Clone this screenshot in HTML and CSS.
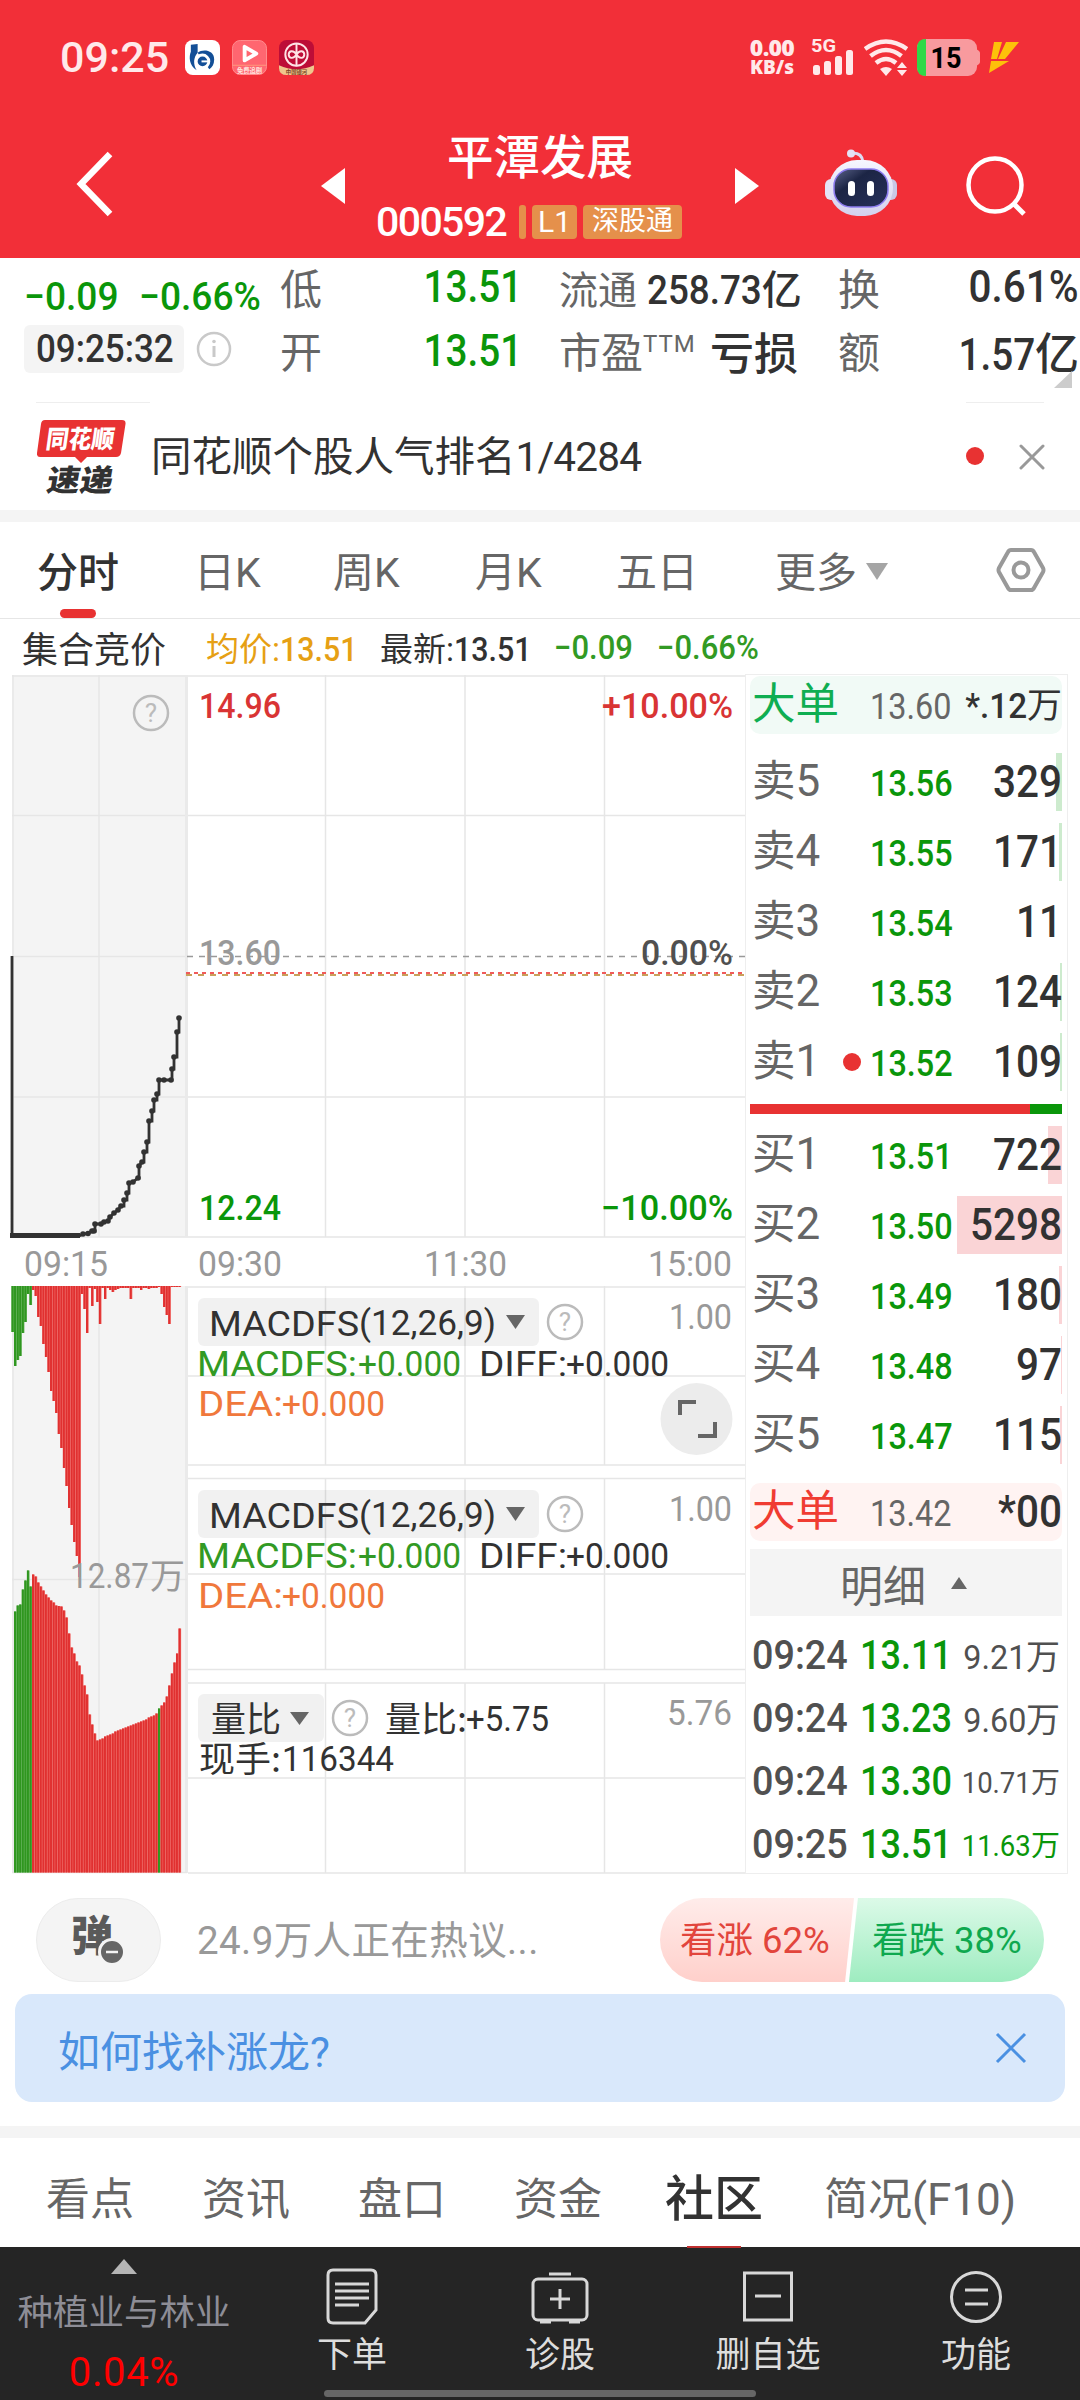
FILE: index.html
```html
<!DOCTYPE html>
<html lang="zh-CN">
<head>
<meta charset="UTF-8">
<meta name="viewport" content="width=device-width, initial-scale=1.0">
<title>平潭发展 000592</title>
<link rel="stylesheet" href="styles.css">
</head>
<body>

<header class="header">
    <div class="status">
        <span class="clock">09:25</span>
        <svg class="app-icon" viewBox="0 0 36 36">
            <rect width="36" height="36" rx="8" fill="#fff"/>
            <path d="M6 5l7-1v9c-4 4-5 12-1 18-8-5-8-14-6-19z" fill="#134f97"/>
            <path d="M13 13c5-4 17-3 17 7 0 5-2 8-5 10" fill="#134f97"/>
            <circle cx="18" cy="22" r="6.500" fill="#134f97" stroke="#fff" stroke-width="3"/>
            <path d="M17 22h8" stroke="#fff" stroke-width="2"/>
        </svg>
        <svg class="app-icon" viewBox="0 0 36 36">
            <rect x=".5" y=".5" width="35" height="35" rx="8" fill="#ff6670" stroke="#ff8d90"/>
            <path d="M13 7v14l12-7z" fill="none" stroke="#fff" stroke-width="4" stroke-linejoin="round"/>
            <path d="M1 26h34" stroke="#ff9a7c"/>
            <text x="18" y="33.5" font-size="6.5" font-weight="700" fill="#ffe6e0" text-anchor="middle">免费追剧</text>
        </svg>
        <svg class="app-icon" viewBox="0 0 36 36">
            <rect width="36" height="36" rx="8" fill="#bd0d37"/>
            <path d="M0 26q18 8 36 0v3q0 7-8 7H8q-8 0-8-7z" fill="#efc78d"/>
            <circle cx="18" cy="15" r="11.5" fill="none" stroke="#ffe3e6" stroke-width="2"/>
            <path d="M18 3v24M18 15c-3-5-8-4-8 0s5 5 8 0 8-4 8 0-5 5-8 0" fill="none" stroke="#ffe3e6" stroke-width="2"/>
            <text x="18" y="34.5" font-size="5.5" font-weight="700" fill="#7c4426" text-anchor="middle">中国银河</text>
        </svg>
        <div class="speed"><b>0.00</b><b>KB/s</b></div>
        <svg class="signal" width="44" height="38" viewBox="0 0 44 38">
            <text x="0" y="14" font-size="18" font-weight="700" fill="#ffe9ea" textLength="25" lengthAdjust="spacingAndGlyphs">5G</text>
            <g fill="#ffe9ea">
                <rect x="2" y="27" width="7" height="10" rx="2.5"/>
                <rect x="13" y="23" width="7" height="14" rx="2.5"/>
                <rect x="24" y="18" width="7" height="19" rx="2.5"/>
                <rect x="35" y="12" width="7" height="25" rx="2.5"/>
            </g>
        </svg>
        <svg class="wifi" width="44" height="37" viewBox="0 0 44 37">
            <g fill="none" stroke="#ffe9ea" stroke-width="4.5">
                <path d="M1 10Q22-5 43 10"/>
                <path d="M6.500 17Q22 5 37.500 17"/>
                <path d="M12 24Q22 16 32 24"/>
            </g>
            <path d="M16 30q6-4 12 0l-6 7z" fill="#ffe9ea"/>
            <path d="M33 29l5-6 5 6zM33 31h10l-5 6z" fill="#ffe9ea"/>
        </svg>
        <svg class="battery" width="64" height="37" viewBox="0 0 64 37">
            <path d="M59 10q4 2 4 4v9q0 2-4 4z" fill="#f89a9e"/>
            <rect width="60" height="37" rx="9" fill="#f89a9e"/>
            <path d="M9 0v37q-9 0-9-9V9q0-9 9-9z" fill="#2fd848"/>
            <text x="29" y="28.500" font-size="29" font-weight="700" fill="#000" text-anchor="middle" textLength="31" lengthAdjust="spacingAndGlyphs">15</text>
        </svg>
        <svg class="bolt" width="30" height="31" viewBox="0 0 30 31">
            <path d="M5 0h8L8 17H2zM17 0h13L16 17H9zM2 19h18L0 31z" fill="#fdc10a"/>
        </svg>
    </div>
    <div class="nav">
        <svg class="back" width="38" height="66" viewBox="0 0 38 66"><path d="M35 3L6 33l29 30" fill="none" stroke="#fff" stroke-width="6.500"/></svg>
        <svg class="prev" width="24" height="36" viewBox="0 0 24 36"><path d="M0 18L24 0v36z" fill="#fff"/></svg>
        <div class="title">
            <div class="stock-name">平潭发展</div>
            <div class="stock-meta">
                <span class="code">000592</span>
                <i class="tag-line"></i>
                <span class="tag tag-l1">L1</span>
                <span class="tag">深股通</span>
            </div>
        </div>
        <svg class="next" width="24" height="36" viewBox="0 0 24 36"><path d="M24 18L0 0v36z" fill="#fff"/></svg>
        <svg class="robot" width="72" height="68" viewBox="0 0 72 68">
            <defs>
                <linearGradient id="head" x1="0" y1="0" x2="0" y2="1"><stop offset="0" stop-color="#f6f6ff"/><stop offset="1" stop-color="#d3d1ee"/></linearGradient>
                <linearGradient id="face" x1="0" y1="0" x2="1" y2="1"><stop offset="0" stop-color="#5e668d"/><stop offset=".35" stop-color="#1c2545"/><stop offset="1" stop-color="#27305a"/></linearGradient>
            </defs>
            <path d="M26 4q11-1 12 9" fill="none" stroke="#dcdcf2" stroke-width="3"/>
            <circle cx="26" cy="4.500" r="4" fill="#e4e3f6"/>
            <rect y="30" width="14" height="21" rx="6" fill="#e4e3f6"/>
            <rect x="58" y="30" width="14" height="21" rx="6" fill="#c9c8e6"/>
            <rect x="4" y="11" width="64" height="56" rx="28" fill="url(#head)"/>
            <rect x="9" y="20" width="54" height="38" rx="17" fill="url(#face)" stroke="#8d7cf0" stroke-width="1.500"/>
            <rect x="23" y="32" width="7" height="15" rx="3.500" fill="#fff"/>
            <rect x="42" y="32" width="7" height="15" rx="3.500" fill="#fff"/>
        </svg>
        <svg class="search" width="62" height="62" viewBox="0 0 62 62">
            <circle cx="30" cy="30" r="26.500" fill="none" stroke="#fff" stroke-width="4.500"/>
            <path d="M48 48l11 11" stroke="#fff" stroke-width="5"/>
        </svg>
    </div>
</header>

<section class="quote">
    <div class="quote-left">
        <div class="change"><span class="num">−0.09</span><span class="num">−0.66%</span></div>
        <div class="time-row">
            <div class="time-pill"><span class="num">09:25:32</span></div>
            <svg width="36" height="36" viewBox="0 0 36 36">
                <circle cx="18" cy="18" r="16" fill="none" stroke="#c9c9c9" stroke-width="2.500"/>
                <circle cx="18" cy="10.500" r="1.800" fill="#c9c9c9"/>
                <path d="M18 15v11" stroke="#c9c9c9" stroke-width="3"/>
            </svg>
        </div>
    </div>
    <dl class="stats">
        <div><dt>低</dt><dd class="green num">13.51</dd></div>
        <div><dt class="small">流通</dt><dd class="mid"><span class="num">258.73</span>亿</dd></div>
        <div><dt>换</dt><dd class="num turnover">0.61%</dd></div>
        <div><dt>开</dt><dd class="green num">13.51</dd></div>
        <div><dt>市盈<sup>TTM</sup></dt><dd class="word">亏损</dd></div>
        <div><dt>额</dt><dd class="amount"><span class="num">1.57</span>亿</dd></div>
    </dl>
    <i class="corner"></i>
</section>

<section class="news">
    <svg class="news-logo" width="90" height="74" viewBox="0 0 90 74">
        <path d="M8 0h77q4 0 3.500 4l-4.500 29q-1 4-5 4H50l-6 6-6-6H3q-3.500 0-3-4L4 4q.5-4 4-4z" fill="#e83232"/>
        <text x="43" y="28" font-size="25" font-weight="900" fill="#fff" text-anchor="middle" textLength="68" lengthAdjust="spacingAndGlyphs" transform="skewX(-8) translate(3 0)">同花顺</text>
        <text x="45" y="71" font-size="30" font-weight="900" fill="#323232" text-anchor="middle" textLength="66" lengthAdjust="spacingAndGlyphs" transform="skewX(-10) translate(9 0)">速递</text>
    </svg>
    <p>同花顺个股人气排名<span>1/4284</span></p>
    <i class="dot"></i>
    <svg class="close" width="26" height="26" viewBox="0 0 26 26"><path d="M2 2l22 22M24 2L2 24" stroke="#999" stroke-width="3" stroke-linecap="round"/></svg>
</section>

<nav class="periods">
    <a class="active">分时</a>
    <a>日K</a>
    <a>周K</a>
    <a>月K</a>
    <a>五日</a>
    <a>更多<i></i></a>
    <svg width="50" height="46" viewBox="0 0 50 46">
        <path d="M15 3h20q2 0 3 2l9 16q1 2 0 4l-9 16q-1 2-3 2H15q-2 0-3-2L3 25q-1-2 0-4l9-16q1-2 3-2z" fill="none" stroke="#999" stroke-width="4"/>
        <circle cx="25" cy="23" r="7.500" fill="none" stroke="#999" stroke-width="4"/>
    </svg>
</nav>

<div class="summary">
    <b>集合竞价</b>
    <span class="avg">均价:<span class="num">13.51</span></span>
    <span class="last">最新:<span class="num">13.51</span></span>
    <span class="num down">−0.09</span>
    <span class="num down">−0.66%</span>
</div>

<main class="market">
    <svg class="chart" width="745" height="1201" viewBox="0 674 745 1201">
        <!-- call auction background -->
        <rect x="12" y="675" width="175" height="562" fill="#f4f4f4"/>
        <rect x="12" y="1286" width="175" height="587" fill="#f4f4f4"/>

        <!-- price grid -->
        <g stroke="#e6e6e6" stroke-width="1.500">
            <path d="M12 676H745M12 815.500H745M12 956.500H187M12 1097H745M12 1237H745"/>
            <path d="M13 675V1237M99 675V1237M325.500 675V1237M465 675V1237M604.500 675V1237"/>
            <path d="M186.500 675V1237M186.500 1286V1873" stroke="#eaeaea" stroke-width="3"/>
            <path d="M13 1286V1873M99 1286V1873M12 1579.500H187M12 1872.500H187"/>
            <path d="M188 1287H745M188 1376H745M188 1465H745"/>
            <path d="M188 1478.500H745M188 1574H745M188 1669.500H745"/>
            <path d="M188 1683H745M188 1778H745M188 1873H745"/>
            <path d="M325.500 1286V1465M465 1286V1465M604.500 1286V1465"/>
            <path d="M325.500 1478V1670M465 1478V1670M604.500 1478V1670"/>
            <path d="M325.500 1683V1873M465 1683V1873M604.500 1683V1873"/>
        </g>
        <path d="M187 956.500H745" stroke="#999" stroke-width="1.500" stroke-dasharray="6 6"/>
        <path d="M186 975H745" stroke="#c8a05a" stroke-width="2" stroke-dasharray="6 6"/>
        <path d="M186 973H745" stroke="#f05a5a" stroke-width="2" stroke-dasharray="4 4"/>

        <g id="priceLine"></g>

        <g class="axis">
            <text x="199" y="718" textLength="82" fill="#d93434">14.96</text>
            <text x="602" y="718" textLength="131" fill="#d93434">+10.00%</text>
            <text x="199" y="965" textLength="82" fill="#999">13.60</text>
            <text x="641" y="965" textLength="92" fill="#505050">0.00%</text>
            <text x="199" y="1220" textLength="82" fill="#0a960a">12.24</text>
            <text x="601" y="1220" textLength="132" fill="#0a960a">−10.00%</text>
        </g>
        <g class="axis scale" fill="#999">
            <text x="24" y="1276" textLength="84">09:15</text>
            <text x="198" y="1276" textLength="84">09:30</text>
            <text x="424" y="1276" textLength="83">11:30</text>
            <text x="648" y="1276" textLength="84">15:00</text>
            <text x="669" y="1329" textLength="63">1.00</text>
            <text x="669" y="1521" textLength="63">1.00</text>
            <text x="667" y="1725" textLength="65">5.76</text>
        </g>
        <g class="help">
            <circle cx="151" cy="713" r="17"/><text x="151" y="722">?</text>
            <circle cx="565" cy="1322" r="17"/><text x="565" y="1331">?</text>
            <circle cx="565" cy="1514" r="17"/><text x="565" y="1523">?</text>
            <circle cx="350" cy="1718" r="17"/><text x="350" y="1727">?</text>
        </g>

        <g id="bars"></g>
        <g class="axis scale" fill="#999"><text x="70" y="1588" textLength="79">12.87</text><text x="150" y="1589" class="cjk" textLength="35">万</text></g>

        <!-- indicator panels -->
        <g id="macd">
            <rect x="198" y="1298" width="341" height="48" rx="6" fill="rgba(0,0,0,.055)"/>
            <path d="M506 1315h19l-9.500 14z" fill="#666"/>
            <g class="ind">
                <text x="209" y="1336" textLength="150" fill="#323232">MACDFS</text>
                <text x="359" y="1335" textLength="137" fill="#323232">(12,26,9)</text>
                <text x="197" y="1376" textLength="160" fill="#329a24">MACDFS:</text>
                <text x="358" y="1376" textLength="103" fill="#329a24">+0.000</text>
                <text x="479" y="1376" textLength="88" fill="#323232">DIFF:</text>
                <text x="566" y="1376" textLength="103" fill="#323232">+0.000</text>
                <text x="198" y="1416" textLength="85" fill="#f0783c">DEA:</text>
                <text x="282" y="1416" textLength="103" fill="#f0783c">+0.000</text>
            </g>
        </g>
        <use href="#macd" y="192"/>
        <rect x="198" y="1694" width="126" height="48" rx="6" fill="#f1f1f1"/>
        <path d="M290 1712h19l-9.500 13z" fill="#666"/>
        <g class="cjk" fill="#323232">
            <text x="211" y="1732" textLength="70">量比</text>
            <text x="385" y="1732" textLength="82">量比:</text>
            <text x="199" y="1772" textLength="82">现手:</text>
        </g>
        <g class="axis scale" fill="#323232">
            <text x="466" y="1731" textLength="83">+5.75</text>
            <text x="282" y="1771" textLength="112">116344</text>
        </g>
        <circle cx="696.500" cy="1419" r="36" fill="#ececec"/>
        <path d="M680 1415v-13h16M715 1422v14h-17" fill="none" stroke="#666" stroke-width="4"/>
    </svg>

    <aside class="book">
        <div class="row big sell"><span class="label">大单</span><span class="price num">13.60</span><span class="vol wan"><span class="num">*.12</span>万</span></div>
        <div class="levels">
            <div class="row"><i class="depth" style="width:6px"></i><span class="label">卖<em>5</em></span><span class="price num">13.56</span><span class="vol num">329</span></div>
            <div class="row"><i class="depth" style="width:3px"></i><span class="label">卖<em>4</em></span><span class="price num">13.55</span><span class="vol num">171</span></div>
            <div class="row"><span class="label">卖<em>3</em></span><span class="price num">13.54</span><span class="vol num">11</span></div>
            <div class="row"><i class="depth" style="width:2px"></i><span class="label">卖<em>2</em></span><span class="price num">13.53</span><span class="vol num">124</span></div>
            <div class="row current"><i class="depth" style="width:2px"></i><span class="label">卖<em>1</em></span><span class="price num">13.52</span><span class="vol num">109</span></div>
        </div>
        <div class="ratio"><i></i></div>
        <div class="levels buy">
            <div class="row"><i class="depth" style="width:14px"></i><span class="label">买<em>1</em></span><span class="price num">13.51</span><span class="vol num">722</span></div>
            <div class="row"><i class="depth" style="width:105px"></i><span class="label">买<em>2</em></span><span class="price num">13.50</span><span class="vol num">5298</span></div>
            <div class="row"><i class="depth" style="width:3px"></i><span class="label">买<em>3</em></span><span class="price num">13.49</span><span class="vol num">180</span></div>
            <div class="row"><i class="depth" style="width:1px"></i><span class="label">买<em>4</em></span><span class="price num">13.48</span><span class="vol num">97</span></div>
            <div class="row"><i class="depth" style="width:2px"></i><span class="label">买<em>5</em></span><span class="price num">13.47</span><span class="vol num">115</span></div>
        </div>
        <div class="row big bid"><span class="label">大单</span><span class="price num">13.42</span><span class="vol num">*00</span></div>
        <div class="detail-head">明细<i></i></div>
        <div class="trades">
            <div><span class="num t">09:24</span><span class="num p">13.11</span><span class="v"><span class="num">9.21</span>万</span></div>
            <div><span class="num t">09:24</span><span class="num p">13.23</span><span class="v"><span class="num">9.60</span>万</span></div>
            <div><span class="num t">09:24</span><span class="num p">13.30</span><span class="v tiny"><span class="num">10.71</span>万</span></div>
            <div><span class="num t">09:25</span><span class="num p">13.51</span><span class="v tiny green"><span class="num">11.63</span>万</span></div>
        </div>
    </aside>
</main>

<section class="talk">
    <div class="danmu">
        <b>弹</b>
        <svg width="28" height="28" viewBox="0 0 28 28"><circle cx="14" cy="14" r="12.500" fill="#666" stroke="#f4f4f4" stroke-width="3"/><path d="M8 14h12" stroke="#f4f4f4" stroke-width="2.500"/></svg>
    </div>
    <p>24.9万人正在热议...</p>
    <div class="vote">
        <span class="vote-up">看涨 62%</span>
        <span class="vote-down">看跌 38%</span>
    </div>
</section>

<div class="tip">
    <span>如何找补涨龙?</span>
    <svg width="32" height="32" viewBox="0 0 32 32"><path d="M2 2l28 28M30 2L2 30" stroke="#4a90e2" stroke-width="3"/></svg>
</div>

<nav class="tabs">
    <a>看点</a>
    <a>资讯</a>
    <a>盘口</a>
    <a>资金</a>
    <a class="active">社区</a>
    <a class="f10">简况(F10)</a>
</nav>

<footer class="toolbar">
    <div class="sector">
        <i></i>
        <span>种植业与林业</span>
        <strong>0.04%</strong>
    </div>
    <div class="tool">
        <svg width="58" height="58" viewBox="0 0 58 58" fill="none" stroke="#d8d8d8" stroke-width="3">
            <path d="M10 3h38q5 0 5 5v35L42 56H10q-5 0-5-5V8q0-5 5-5z"/>
            <path d="M12 17h34M12 24h34M12 31h34M12 38h24"/>
        </svg>
        <span>下单</span>
    </div>
    <div class="tool">
        <svg width="58" height="58" viewBox="0 0 58 58" fill="none" stroke="#d8d8d8" stroke-width="3">
            <rect x="2" y="12" width="54" height="41" rx="5"/>
            <path d="M18 7h22M29 22v20M19 32h20M9 55h11M38 55h11"/>
        </svg>
        <span>诊股</span>
    </div>
    <div class="tool">
        <svg width="58" height="58" viewBox="0 0 58 58" fill="none" stroke="#d8d8d8" stroke-width="3">
            <rect x="5.500" y="6" width="47" height="47"/>
            <path d="M16 29h26"/>
        </svg>
        <span>删自选</span>
    </div>
    <div class="tool">
        <svg width="58" height="58" viewBox="0 0 58 58" fill="none" stroke="#d8d8d8" stroke-width="3">
            <circle cx="29" cy="30" r="24.500"/>
            <path d="M18 23h23M18 37h23"/>
        </svg>
        <span>功能</span>
    </div>
    <i class="home-bar"></i>
</footer>

<script src="chart.js"></script>
</body>
</html>
```

FILE: styles.css
```css
* {
    box-sizing: border-box;
}

body {
    margin: 0;
    width: 1080px;
    height: 2400px;
    overflow: hidden;
    background: #fff;
    color: #323232;
    font-family: Roboto, "Noto Sans CJK SC", sans-serif;
}

p, dl, dd {
    margin: 0;
}

i, em {
    font-style: normal;
}

svg {
    display: block;
    flex: none;
}

.num {
    display: inline-block;
    font-weight: 500;
    transform: scaleX(.92);
    transform-origin: left;
}

.green {
    color: #0a960a !important;
}

/* header */
.header {
    height: 258px;
    background: #f22f38;
    color: #fff;
}

.status {
    display: flex;
    height: 114px;
    padding-left: 60px;
    align-items: center;
}

.clock {
    width: 125px;
    font-size: 43px;
    font-weight: 500;
    color: #ffe9ea;
}

.app-icon {
    width: 35px;
    height: 35px;
    margin-right: 12px;
}

.speed {
    display: flex;
    flex-direction: column;
    width: 46px;
    margin: 0 16px 0 423px;
    align-items: center;
    font: 700 23px/20px "Noto Sans", sans-serif;
    letter-spacing: -.7px;
    color: #ffe9ea;
    white-space: nowrap;
}

.speed b + b {
    font-size: 19px;
    letter-spacing: 0;
}

.wifi {
    margin-left: 9px;
}

.battery {
    margin-left: 9px;
}

.bolt {
    margin-left: 8px;
}

.nav {
    display: flex;
    height: 144px;
    padding-left: 75px;
    align-items: center;
}

.back {
    margin-top: -4px;
}

.prev {
    margin-left: 208px;
}

.title {
    width: 390px;
    padding-left: 31px;
}

.stock-name {
    font-size: 46.5px;
    font-weight: 500;
    line-height: 60px;
    padding-left: 71px;
    margin-top: -5px;
}

.stock-meta {
    display: flex;
    align-items: center;
    height: 34px;
    margin-top: 17px;
}

.code {
    width: 143px;
    font-size: 41px;
    font-weight: 500;
    letter-spacing: -1.6px;
}

.tag-line {
    width: 7px;
    height: 34px;
    border-radius: 3px;
    background: #e5904b;
}

.tag {
    width: 99px;
    height: 34px;
    margin-left: 6px;
    border-radius: 4px;
    background: #e5904b;
    font-size: 27px;
    line-height: 33px;
    text-align: center;
}

.tag-l1 {
    width: 45px;
    font-size: 30px;
}

.robot {
    margin-left: 66px;
    margin-top: -6px;
}

.search {
    margin-left: 68px;
}

/* quote */
.quote {
    position: relative;
    display: flex;
    height: 144px;
}

.quote-left {
    width: 280px;
}

.change {
    display: flex;
    height: 67px;
    padding: 18px 0 0 24px;
    color: #0a960a;
    font-size: 39.5px;
    line-height: 42px;
}

.change .num {
    transform: scaleX(.94);
}

.change .num + .num {
    margin-left: 14px;
}

.time-row {
    display: flex;
    align-items: center;
    padding-left: 24px;
}

.time-pill {
    width: 160px;
    height: 48px;
    margin-right: 12px;
    padding-left: 12px;
    border-radius: 6px;
    background: #f4f4f4;
    font-size: 38px;
    line-height: 48px;
}

.stats {
    display: grid;
    grid-template-columns: 279px 279px 241px;
    grid-auto-rows: 65px;
    height: 130px;
    margin-top: -5px;
}

.stats > div {
    display: flex;
    justify-content: space-between;
    align-items: center;
    white-space: nowrap;
}

.stats > div:nth-child(-n+3) {
    padding-top: 2px;
}

.stats > div:nth-child(3n+1) {
    padding-right: 37px;
}

.stats > div:nth-child(3n+2) {
    padding-right: 40px;
}

.stats > div:nth-child(n+4) dt {
    margin-top: -2px;
}

.stats dt {
    font-size: 42px;
    color: #666;
}

.stats .small {
    font-size: 39px;
}

.stats sup {
    font-size: 24px;
    line-height: 0;
    vertical-align: 16px;
    letter-spacing: 1px;
}

.stats dd {
    font-size: 44px;
    font-weight: 500;
}

.stats dd.num,
.stats dd .num {
    transform: scaleX(.88);
    transform-origin: right;
}

.stats dd.turnover {
    transform: scaleX(.92);
}

.stats .mid {
    font-size: 40px;
}

.stats .mid .num {
    transform: scaleX(.92);
}

.corner {
    position: absolute;
    left: 1054px;
    top: 113px;
    border-left: 18px solid transparent;
    border-bottom: 17px solid #ccc;
}

/* news strip */
.news {
    display: flex;
    height: 120px;
    padding: 18px 0 0 37px;
    border-bottom: 12px solid #f4f4f4;
    background:
        linear-gradient(#eee, #eee) 36px 0 / 114px 1px no-repeat,
        linear-gradient(#eee, #eee) 966px 0 / 78px 1px no-repeat;
}

.news p {
    width: 813px;
    margin-left: 24px;
    font-size: 40.5px;
    line-height: 74px;
}

.news p span {
    letter-spacing: -.8px;
}

.dot {
    width: 18px;
    height: 18px;
    margin-top: 27px;
    margin-left: 2px;
    border-radius: 50%;
    background: #e83232;
}

.close {
    margin: 24px 0 0 35px;
}

/* period tabs */
.periods {
    position: relative;
    display: grid;
    grid-template-columns: 157px 139px 142px 141px 159px 221px 60px;
    height: 97px;
    padding-left: 37px;
    align-items: center;
    border-bottom: 1.500px solid #e6e6e6;
    font-size: 41px;
    color: #666;
}

.periods a {
    padding-bottom: 3px;
}

.periods .active {
    color: #323232;
    font-weight: 500;
}

.periods .active::after {
    content: "";
    position: absolute;
    left: 60px;
    bottom: 0;
    width: 36px;
    height: 9px;
    border-radius: 5px;
    background: #e83232;
}

.periods a i {
    display: inline-block;
    margin-left: 9px;
    vertical-align: 7px;
    border: 11px solid transparent;
    border-top: 17px solid #a5a5a5;
    border-bottom: 0;
}

.summary {
    display: flex;
    height: 55px;
    padding-left: 22px;
    align-items: center;
    font-size: 33px;
    white-space: nowrap;
}

.summary b {
    width: 184px;
    font-size: 36px;
    font-weight: 400;
}

.summary > .avg {
    width: 174px;
    color: #e6a014;
}

.summary > .last {
    width: 174px;
}

.summary .down {
    width: 103px;
    padding-top: 2px;
    color: #329a24;
    transform: scaleX(.94);
}

/* chart and order book */
.market {
    display: flex;
    height: 1201px;
}

.chart text {
    font-size: 35px;
}

.axis text {
    font-weight: 500;
}

.scale text {
    font-weight: 400;
}

.axis text,
.ind text {
    font-family: Roboto, sans-serif;
}

.chart .cjk,
.chart .cjk text {
    font-family: "Noto Sans CJK SC", sans-serif;
    font-weight: 400;
}

.chart .help circle {
    fill: none;
    stroke: #bbb;
    stroke-width: 2.5px;
}

.chart .help text {
    font-size: 26px;
    fill: #bbb;
    text-anchor: middle;
}

.book {
    width: 323px;
    height: 1200px;
    padding: 1px 5px 0 4px;
    border: 1px solid #eee;
}

.row {
    position: relative;
    display: grid;
    grid-template-columns: 120px 82px 110px;
    height: 58px;
    line-height: 58px;
    white-space: nowrap;
}

.big {
    border-radius: 10px;
}

.sell {
    background: #f1faf6;
}

.bid {
    margin-top: 19px;
    background: #fff3f2;
}

.label {
    position: relative;
    padding-left: 2px;
    font-size: 43.5px;
    line-height: 57px;
    color: #666;
}

.label em {
    font-size: 44px;
}

.sell .label {
    color: #0fae52;
}

.bid .label {
    color: #f03c32;
}

.price {
    position: relative;
    font-size: 36px;
    line-height: 62px;
    color: #0a960a;
}

.price.num {
    transform: scaleX(.9);
}

.big .price {
    color: #666;
    font-weight: 400;
}

.vol {
    position: relative;
    font-size: 44px;
    text-align: right;
}

.vol.num {
    transform-origin: right;
}

.vol.wan {
    font-size: 35px;
    line-height: 62px;
}

.vol.wan .num {
    transform: scaleX(.95);
    transform-origin: right;
}

.levels {
    display: flex;
    flex-direction: column;
    gap: 12px;
    padding-top: 19px;
}

.depth {
    position: absolute;
    right: 0;
    top: 0;
    height: 58px;
    background: #cdebce;
}

.buy .depth {
    background: #fad4d6;
}

.current .price::before {
    content: "";
    position: absolute;
    left: -30px;
    top: 20px;
    width: 20px;
    height: 18px;
    border-radius: 50%;
    background: #e83232;
}

.ratio {
    height: 10px;
    margin-top: 13px;
    background: #0a960a;
}

.ratio i {
    display: block;
    width: 280px;
    height: 10px;
    background: #e83232;
}

.levels.buy {
    padding-top: 12px;
}

.detail-head {
    display: flex;
    height: 67px;
    margin-top: 8px;
    padding-left: 90px;
    align-items: center;
    background: #f4f4f4;
    font-size: 43px;
    color: #666;
}

.detail-head i {
    margin-left: 25px;
    border: 8px solid transparent;
    border-bottom: 12px solid #666;
    border-top: 0;
}

.trades {
    padding-top: 8px;
}

.trades > div {
    display: grid;
    grid-template-columns: 108px 92px 108px;
    height: 63px;
    padding-left: 2px;
    line-height: 63px;
    font-size: 41px;
    white-space: nowrap;
    color: #505050;
}

.trades .p {
    font-size: 41px;
    color: #0a960a;
    transform: scaleX(.88);
}

.trades .v {
    font-size: 34px;
    line-height: 67px;
    text-align: right;
}

.trades .v .num {
    font-weight: 400;
    transform: scaleX(.95);
    transform-origin: right;
}

.trades .tiny {
    font-size: 29px;
}

/* discussion */
.talk {
    display: flex;
    height: 84px;
    margin-top: 23px;
    padding-left: 36px;
}

.danmu {
    position: relative;
    width: 125px;
    height: 84px;
    border: 1px solid #ececec;
    border-radius: 42px;
    background: #f4f4f4;
}

.danmu b {
    display: block;
    padding-left: 34px;
    font-size: 42px;
    font-weight: 900;
    line-height: 76px;
    color: #5a5a5a;
}

.danmu svg {
    position: absolute;
    left: 61px;
    top: 39px;
}

.talk p {
    width: 463px;
    margin-left: 36px;
    font-size: 38.5px;
    line-height: 86px;
    letter-spacing: .4px;
    color: #999;
}

.vote {
    display: flex;
    width: 384px;
    overflow: hidden;
    border-radius: 42px;
    font-size: 36.5px;
    line-height: 86px;
    white-space: nowrap;
}

.vote-up {
    width: 199px;
    padding-left: 20px;
    background: linear-gradient(#ffecea, #ffd0cb);
    color: #e2453c;
    clip-path: polygon(0 0, 97.5% 0, 93% 100%, 0 100%);
}

.vote-down {
    width: 199px;
    margin-left: -14px;
    padding-left: 27px;
    background: linear-gradient(#dcfae8, #9eecc0);
    color: #0fa84f;
    clip-path: polygon(6.5% 0, 100% 0, 100% 100%, 2% 100%);
}

.tip {
    display: flex;
    height: 108px;
    margin: 12px 15px 0;
    padding: 0 38px 0 43px;
    justify-content: space-between;
    align-items: center;
    border-radius: 17px;
    background: #d9e8fb;
    font-size: 42px;
    color: #4a90e2;
}

.tabs {
    display: flex;
    height: 121px;
    margin-top: 24px;
    padding-left: 46px;
    border-top: 12px solid #f4f4f4;
    font-size: 44px;
    line-height: 124px;
    color: #666;
}

.tabs a {
    width: 156px;
}

.tabs .active {
    margin-left: -5px;
    font-size: 49px;
    font-weight: 500;
    color: #323232;
}

.tabs .f10 {
    width: 200px;
    margin-left: 3px;
}

/* bottom toolbar */
.toolbar {
    position: relative;
    display: flex;
    width: 1080px;
    height: 153px;
    background: #252525;
}

.toolbar::before {
    content: "";
    position: absolute;
    left: 687px;
    top: -1px;
    width: 54px;
    height: 2px;
    background: #c03030;
}

.sector {
    display: flex;
    flex-direction: column;
    width: 248px;
    align-items: center;
    font-size: 35.5px;
    color: #8d8d96;
}

.sector i {
    margin-top: 12px;
    border: 13px solid transparent;
    border-bottom: 15px solid #b5b5b5;
    border-top: 0;
}

.sector span {
    height: 60px;
    margin-top: 9px;
    line-height: 60px;
}

.sector strong {
    font-size: 40px;
    font-weight: 400;
    line-height: 60px;
    letter-spacing: .6px;
    color: #f00;
}

.tool {
    display: flex;
    flex-direction: column;
    width: 208px;
    padding-top: 20px;
    align-items: center;
    font-size: 35px;
    line-height: 61px;
    color: #ddd;
}

.home-bar {
    position: absolute;
    left: 324px;
    top: 143px;
    width: 432px;
    height: 7px;
    border-radius: 4px;
    background: #666;
}
```

FILE: chart.js
```js
const NS = "http://www.w3.org/2000/svg";

function add(parent, tag, attrs) {
    const el = document.createElementNS(NS, tag);
    for (const key in attrs) el.setAttribute(key, attrs[key]);
    parent.appendChild(el);
}

// Auction price, stepped
const line = document.getElementById("priceLine");
const points = [
    [12, 1235.5], [80, 1235.5], [83, 1234], [88, 1233.5], [92, 1231], [94, 1231], [95, 1224], [101, 1224],
    [104, 1222], [108, 1221], [110, 1217], [114, 1213], [118, 1210], [121, 1206], [124, 1200],
    [127, 1193], [129, 1183], [133, 1182], [138, 1178], [139, 1166], [142, 1162], [144, 1152],
    [147, 1142], [149, 1121], [152, 1111], [154, 1100], [157, 1094], [159, 1080], [164, 1080],
    [171, 1080], [172, 1069], [174, 1057], [177, 1032], [179, 1018]
];
let d = "M12 956V1235.5";
points.forEach(([x, y], i) => {
    d += i > 0 && points[i - 1][1] - y > 5 ? `H${x}V${y}` : `L${x} ${y}`;
    if (i > 1) add(line, "circle", { cx: x, cy: y, r: 2.8, fill: "#323232" });
});
add(line, "path", { d, fill: "none", stroke: "#323232", "stroke-width": 2.8 });
add(line, "path", { d: "M10 1235.5H80", stroke: "#323232", "stroke-width": 5 });

// Unmatched volume hangs from the top, matched volume stands on the bottom
const bars = document.getElementById("bars");
const unmatched = [
    46, 80, 74, 70, 47, 36, 8, 19, 4, 10, 31, 40, 58, 71, 86, 105, 115, 127, 148, 162, 182, 200,
    222, 239, 256, 270, 291, 8, 23, 47, 2, 20, 3, 16, 38, 2, 13, 2, 4, 6, 4, 3, 2, 2, 2, 2, 13,
    2, 2, 2, 4, 2, 2, 3, 2, 2, 2, 1, 8, 21, 29, 38, 1, 1, 1, 1
];
const matched = [
    0, 261, 267, 268, 283, 292, 302, 286, 298, 296, 290, 286, 282, 278, 275, 272, 270, 267, 266.5,
    266, 262, 255, 239, 225, 219, 211, 207, 198, 187, 178, 158, 148, 139, 132, 133, 134, 136, 137,
    138, 139, 141, 142, 143, 144, 145, 146, 147, 148, 149, 150, 151, 152, 153, 155, 156, 157, 159,
    164, 167, 170, 176, 187, 199, 210, 219, 244
];
const step = 2.57;

function drawBar(i, y, h, green) {
    if (!h) return;
    const x = 11.5 + i * step;
    add(bars, "rect", { x, y, width: step, height: h, fill: green ? "#55ab48" : "#f0605c" });
    add(bars, "rect", { x, y, width: 1.9, height: h, fill: green ? "#2f961f" : "#e03030" });
}

unmatched.forEach((h, i) => drawBar(i, 1286, h, i < 8));
matched.forEach((h, i) => drawBar(i, 1872.5 - h, h, i < 8 || i === 57));

document.querySelectorAll(".chart text[textLength]").forEach(t => {
    t.setAttribute("lengthAdjust", "spacingAndGlyphs");
});
```
